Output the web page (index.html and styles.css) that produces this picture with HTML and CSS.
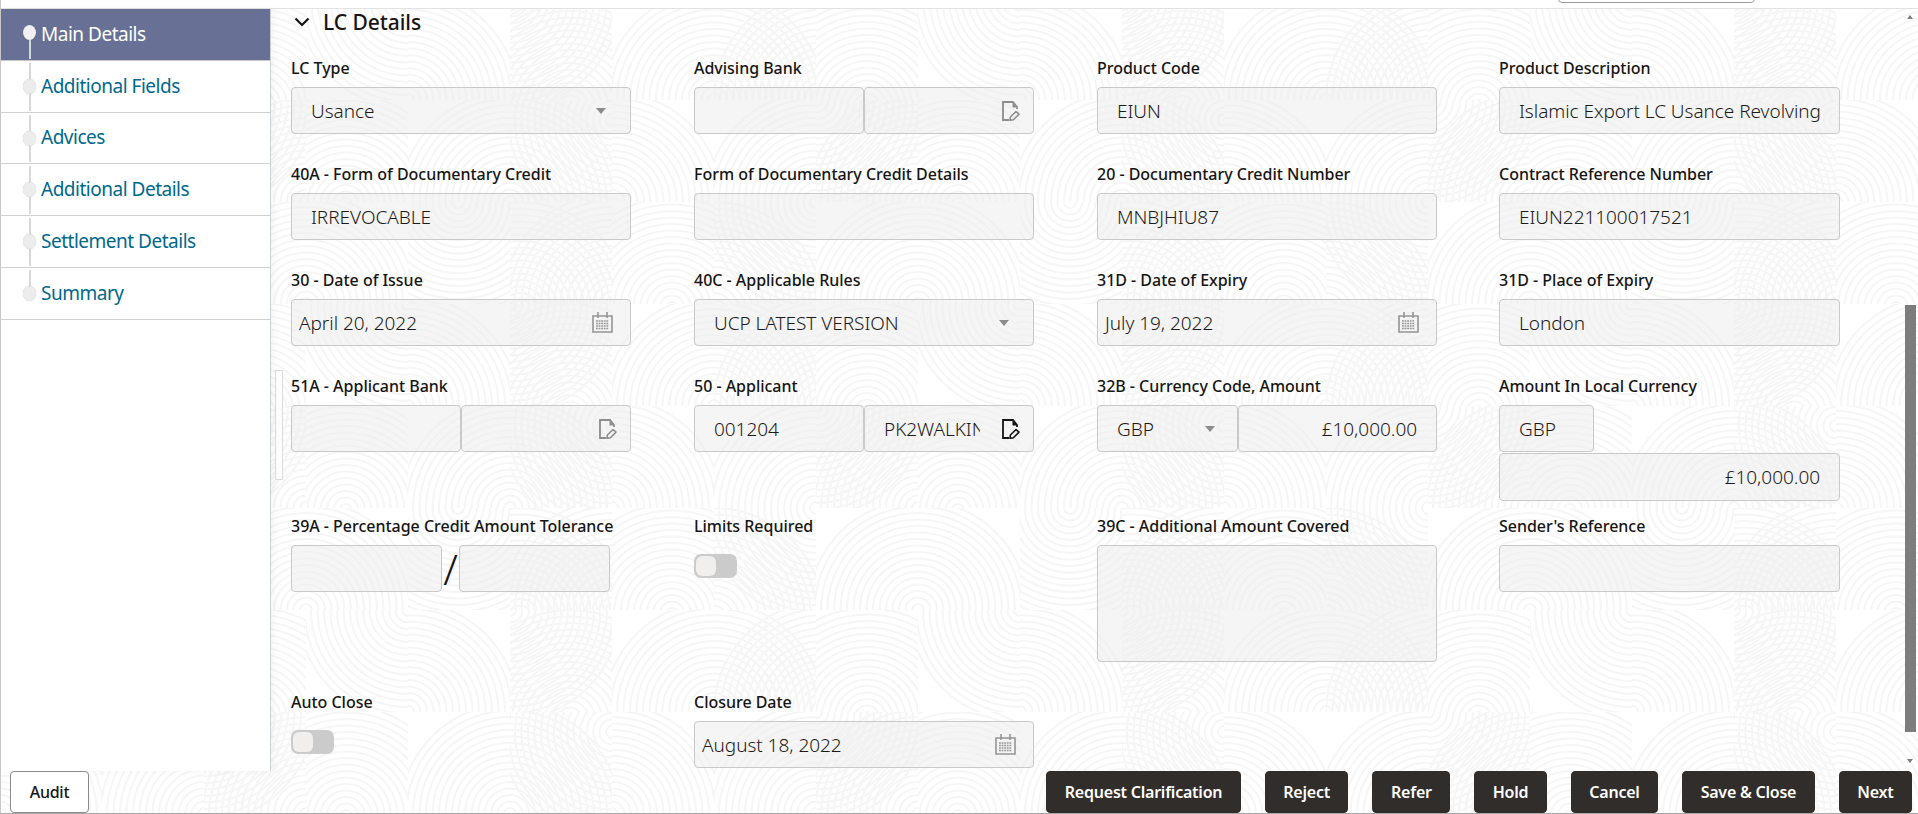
FILE: index.html
```html
<!DOCTYPE html>
<html lang="en">
<head>
<meta charset="utf-8">
<title>LC Details</title>
<link rel="stylesheet" href="styles.css">
</head>
<body>
<svg class="defs" aria-hidden="true">
  <symbol id="i-doc" viewBox="0 0 18 20">
    <path d="M7 19H1V1h10l4 5v2" fill="none" stroke="currentColor" stroke-width="1.8"/>
    <path d="M10.5 1.5V6.5H15z" fill="currentColor"/>
    <path d="M14 10.5l3 2.6-5.6 5.6-3.4.6.4-3.3z" fill="none" stroke="currentColor" stroke-width="1.6" stroke-linejoin="round"/>
  </symbol>
  <symbol id="i-cal" viewBox="0 0 21 21">
    <path d="M1 4h19v16H1z" fill="none" stroke="currentColor" stroke-width="1.6"/>
    <path d="M6 0v6M15 0v6" stroke="currentColor" stroke-width="1.6"/>
    <path d="M4 9h13M4 11.5h13M4 14h13M4 16.5h13" stroke="currentColor" stroke-width="1.5" stroke-dasharray="1.8 .8"/>
  </symbol>
</svg>
<div class="app">
  <div class="topbar"><div class="top-select"></div></div>
  <div class="workspace">
    <nav class="sidebar">
      <ul class="steps">
        <li class="step active">Main Details</li>
        <li class="step">Additional Fields</li>
        <li class="step">Advices</li>
        <li class="step">Additional Details</li>
        <li class="step">Settlement Details</li>
        <li class="step last">Summary</li>
      </ul>
    </nav>
    <main class="content">
      <div class="mini-scroll"></div>
      <h2 class="section-title">
        <svg class="chevron" viewBox="0 0 16 10"><path d="M1.5 1.5L8 8l6.5-6.5" fill="none" stroke="#161513" stroke-width="2.2"/></svg>
        LC Details
      </h2>
      <div class="form-grid">
        <div class="field">
          <label class="label">LC Type</label>
          <div class="box pad between"><span>Usance</span><i class="caret"></i></div>
        </div>
        <div class="field">
          <label class="label">Advising Bank</label>
          <div class="split">
            <div class="box"></div>
            <div class="box icon-end"><svg class="doc muted"><use href="#i-doc"/></svg></div>
          </div>
        </div>
        <div class="field">
          <label class="label">Product Code</label>
          <div class="box pad">EIUN</div>
        </div>
        <div class="field">
          <label class="label">Product Description</label>
          <div class="box pad"><span class="clip">Islamic Export LC Usance Revolving</span></div>
        </div>

        <div class="field">
          <label class="label">40A - Form of Documentary Credit</label>
          <div class="box pad">IRREVOCABLE</div>
        </div>
        <div class="field">
          <label class="label">Form of Documentary Credit Details</label>
          <div class="box pad"></div>
        </div>
        <div class="field">
          <label class="label">20 - Documentary Credit Number</label>
          <div class="box pad">MNBJHIU87</div>
        </div>
        <div class="field">
          <label class="label">Contract Reference Number</label>
          <div class="box pad">EIUN221100017521</div>
        </div>

        <div class="field">
          <label class="label">30 - Date of Issue</label>
          <div class="box date between"><span>April 20, 2022</span><svg class="cal"><use href="#i-cal"/></svg></div>
        </div>
        <div class="field">
          <label class="label">40C - Applicable Rules</label>
          <div class="box pad between"><span>UCP LATEST VERSION</span><i class="caret"></i></div>
        </div>
        <div class="field">
          <label class="label">31D - Date of Expiry</label>
          <div class="box date between"><span>July 19, 2022</span><svg class="cal"><use href="#i-cal"/></svg></div>
        </div>
        <div class="field">
          <label class="label">31D - Place of Expiry</label>
          <div class="box pad">London</div>
        </div>

        <div class="field">
          <label class="label">51A - Applicant Bank</label>
          <div class="split">
            <div class="box"></div>
            <div class="box icon-end"><svg class="doc muted"><use href="#i-doc"/></svg></div>
          </div>
        </div>
        <div class="field">
          <label class="label">50 - Applicant</label>
          <div class="split">
            <div class="box pad">001204</div>
            <div class="box pad icon-end"><span class="clip">PK2WALKIN</span><svg class="doc"><use href="#i-doc"/></svg></div>
          </div>
        </div>
        <div class="field">
          <label class="label">32B - Currency Code, Amount</label>
          <div class="split currency">
            <div class="box pad between small-select"><span>GBP</span><i class="caret"></i></div>
            <div class="box pad right">£10,000.00</div>
          </div>
        </div>
        <div class="field">
          <label class="label">Amount In Local Currency</label>
          <div class="box pad code">GBP</div>
          <div class="box pad right amount">£10,000.00</div>
        </div>

        <div class="field">
          <label class="label">39A - Percentage Credit Amount Tolerance</label>
          <div class="tolerance">
            <div class="box"></div>
            <span class="slash">/</span>
            <div class="box"></div>
          </div>
        </div>
        <div class="field">
          <label class="label">Limits Required</label>
          <div class="toggle"><span class="knob"></span></div>
        </div>
        <div class="field">
          <label class="label">39C - Additional Amount Covered</label>
          <div class="box area"></div>
        </div>
        <div class="field">
          <label class="label">Sender's Reference</label>
          <div class="box"></div>
        </div>

        <div class="field">
          <label class="label">Auto Close</label>
          <div class="toggle"><span class="knob"></span></div>
        </div>
        <div class="field">
          <label class="label">Closure Date</label>
          <div class="box date between"><span>August 18, 2022</span><svg class="cal"><use href="#i-cal"/></svg></div>
        </div>
      </div>
      <div class="scrollbar"><i class="arrow up"></i><i class="thumb"></i><i class="arrow down"></i></div>
    </main>
  </div>
  <footer class="footer">
    <button class="btn light">Audit</button>
    <div class="actions">
      <button class="btn">Request Clarification</button>
      <button class="btn">Reject</button>
      <button class="btn">Refer</button>
      <button class="btn">Hold</button>
      <button class="btn">Cancel</button>
      <button class="btn">Save &amp; Close</button>
      <button class="btn">Next</button>
    </div>
  </footer>
</div>
</body>
</html>
```

FILE: styles.css
```css
* { box-sizing: border-box; }
html, body { margin: 0; height: 100%; }
body {
  font-family: "Noto Sans", "Open Sans", sans-serif;
  color: #161513;
  overflow: hidden;
  background-color: #fff;
  background-position: 0 -2px;
  background-image: url("data:image/svg+xml,<svg xmlns='http://www.w3.org/2000/svg' xmlns:xlink='http://www.w3.org/1999/xlink' width='612' height='306'><defs><g id='a' fill='none' stroke='%23f6f6f6' stroke-width='2.2'><circle r='6'/><circle r='12.5'/><circle r='19'/><circle r='25.5'/><circle r='32'/><circle r='38.5'/><circle r='45'/><circle r='51.5'/><circle r='58'/><circle r='64.5'/><circle r='71'/><circle r='77.5'/><circle r='84'/><circle r='90.5'/><circle r='97'/><circle r='103.5'/><circle r='110'/></g></defs><svg width='102' height='102'><use href='%23a' x='102' y='102'/></svg><svg x='102' width='102' height='102'><use href='%23a' x='0' y='102'/><use href='%23a' x='110' y='102'/></svg><svg x='204' width='102' height='102'><use href='%23a' x='51' y='108'/></svg><svg x='306' width='102' height='102'><use href='%23a' x='102' y='0'/></svg><svg x='408' width='102' height='102'><use href='%23a' x='0' y='102'/></svg><svg x='510' width='102' height='102'><use href='%23a' x='60' y='110'/><use href='%23a' x='0' y='0'/></svg><svg y='102' width='102' height='102'><use href='%23a' x='0' y='102'/></svg><svg x='102' y='102' width='102' height='102'><use href='%23a' x='102' y='102'/></svg><svg x='204' y='102' width='102' height='102'><use href='%23a' x='0' y='0'/><use href='%23a' x='102' y='102'/></svg><svg x='306' y='102' width='102' height='102'><use href='%23a' x='40' y='104'/></svg><svg x='408' y='102' width='102' height='102'><use href='%23a' x='102' y='102'/></svg><svg x='510' y='102' width='102' height='102'><use href='%23a' x='0' y='102'/><use href='%23a' x='102' y='20'/></svg><svg y='204' width='102' height='102'><use href='%23a' x='60' y='106'/></svg><svg x='102' y='204' width='102' height='102'><use href='%23a' x='102' y='0'/><use href='%23a' x='0' y='110'/></svg><svg x='204' y='204' width='102' height='102'><use href='%23a' x='102' y='102'/></svg><svg x='306' y='204' width='102' height='102'><use href='%23a' x='0' y='102'/></svg><svg x='408' y='204' width='102' height='102'><use href='%23a' x='50' y='0'/></svg><svg x='510' y='204' width='102' height='102'><use href='%23a' x='102' y='102'/><use href='%23a' x='10' y='110'/></svg></svg>");
}
.defs { width: 0; height: 0; display: block; overflow: hidden; }

.app {
  height: 814px;
  display: flex;
  flex-direction: column;
  border-left: 1px solid #c8c8c8;
  border-bottom: 1px solid #a8a8a8;
}

.topbar {
  height: 9px;
  flex: none;
  background: #fff;
  border-bottom: 1px solid #e2e2e2;
  position: relative;
}
.top-select {
  position: absolute;
  left: 1557px;
  top: -8px;
  width: 197px;
  height: 11px;
  border: 1px solid #9c9c9c;
  border-radius: 4px;
}

.workspace { flex: 1; min-height: 0; display: flex; }

.sidebar {
  width: 270px;
  flex: none;
  background: #fff;
  border-right: 1px solid #ced3d8;
  box-shadow: 3px 0 8px rgba(0, 0, 0, .04);
  position: relative;
  z-index: 1;
}
.steps { list-style: none; margin: 0; padding: 0; }
.step {
  height: 51.8px;
  padding: 0 0 1px 40px;
  display: flex;
  align-items: center;
  font-size: 19px;
  letter-spacing: -.49px;
  color: #00688c;
  border-bottom: 1px solid #d0d0d0;
  position: relative;
}
.step::before {
  content: "";
  position: absolute;
  left: 28px;
  top: 2px;
  bottom: 1px;
  width: 2px;
  background: #d8d8d8;
}
.step.last::before { bottom: 22px; }
.step::after {
  content: "";
  position: absolute;
  left: 22px;
  top: 18px;
  width: 13px;
  height: 15px;
  border-radius: 50%;
  background: #ececec;
  box-shadow: 0 0 1px rgba(0, 0, 0, .25);
}
.step.active {
  background: #687195;
  color: #fff;
  border-bottom-color: #c8c8c8;
}
.step.active::before { top: 24px; background: #d6d6de; }
.step.active::after { top: 16px; background: #f0f0f0; }

.content {
  flex: 1;
  min-width: 0;
  padding: 0 0 0 20px;
  position: relative;
  overflow: hidden;
}
.mini-scroll {
  position: absolute;
  left: 4px;
  top: 361px;
  width: 8px;
  height: 110px;
  border: 1px solid #dcdcdc;
  background: rgba(255, 255, 255, .7);
}
.section-title {
  margin: 0 0 23px;
  height: 26px;
  display: flex;
  align-items: center;
  gap: 13px;
  font-size: 21px;
  font-weight: 500;
  letter-spacing: -.05px;
  padding-left: 3px;
}
.chevron { width: 16px; height: 10px; }

.form-grid {
  display: grid;
  grid-template-columns: 340px 340px 339px 341px;
  grid-template-rows: 106px 106px 106px 140px 176px auto;
  column-gap: 63px;
}
.field:nth-child(4n+3) { margin-right: -1px; }
.label {
  display: block;
  height: 29px;
  line-height: 20px;
  font-size: 16px;
  font-weight: 500;
  letter-spacing: -.02px;
  color: #161513;
  white-space: nowrap;
}
.box {
  height: 47px;
  min-width: 0;
  display: flex;
  align-items: center;
  background: rgba(236, 236, 236, .5);
  border: 1px solid #c9c9c9;
  border-radius: 4px;
  font-size: 19px;
  font-weight: 300;
  letter-spacing: -.04px;
  color: #1c1a18;
  white-space: nowrap;
}
.pad { padding: 0 19px; }
.date { padding: 0 17px 0 7px; }
.between { justify-content: space-between; }
.right { justify-content: flex-end; }
.clip { overflow: hidden; min-width: 0; flex: 1; }

.caret {
  width: 0;
  height: 0;
  margin-right: 5px;
  border-left: 5.5px solid transparent;
  border-right: 5.5px solid transparent;
  border-top: 6px solid #8b8b8b;
}
.split { display: grid; grid-template-columns: 1fr 1fr; }
.split.currency { grid-template-columns: 141px 1fr; }
.icon-end { justify-content: flex-end; padding-right: 13px; gap: 22px; }
.doc { width: 18px; height: 20px; flex: none; color: #161513; }
.doc.muted { color: #8d8d8d; }
.cal { width: 21px; height: 21px; flex: none; color: #959595; }
.small-select .caret { margin-right: 3px; }
.code { width: 95px; }
.amount { height: 48px; margin-top: 1px; }
.area { height: 117px; }
.tolerance { display: flex; align-items: center; }
.tolerance .box { width: 151px; }
.slash {
  width: 17px;
  text-align: center;
  font-size: 42px;
  line-height: 47px;
  font-weight: 300;
  color: #161513;
}
.toggle {
  width: 43px;
  height: 24px;
  margin-top: 9px;
  padding: 2px;
  background: #cbcbcb;
  border-radius: 7px;
}
.knob {
  display: block;
  width: 20px;
  height: 20px;
  border-radius: 6px;
  background: #f0efee;
}

.scrollbar {
  position: absolute;
  right: 1px;
  top: 0;
  bottom: 0;
  width: 12px;
}
.thumb {
  position: absolute;
  left: 0;
  top: 296px;
  width: 11px;
  height: 427px;
  background: #7d7d7d;
}
.arrow {
  position: absolute;
  left: 2px;
  width: 0;
  height: 0;
  border-left: 3.5px solid transparent;
  border-right: 3.5px solid transparent;
}
.arrow.up { top: 6px; border-bottom: 4px solid #7d7d7d; }
.arrow.down { top: 750px; border-top: 4px solid #7d7d7d; }

.footer {
  height: 42px;
  flex: none;
  display: flex;
  justify-content: space-between;
  padding: 0 6px 0 9px;
  position: relative;
  z-index: 2;
}
.actions { display: flex; gap: 24px; }
.btn {
  height: 42px;
  padding: 0 17.5px;
  border: 1px solid #312d2a;
  border-radius: 4px;
  background: #312d2a;
  color: #fff;
  font-family: inherit;
  font-size: 16px;
  font-weight: 600;
  letter-spacing: -.23px;
}
.btn.light {
  width: 79px;
  padding: 0;
  background: #fff;
  color: #161513;
  border-color: #8a8a8a;
  font-weight: 500;
}
```
